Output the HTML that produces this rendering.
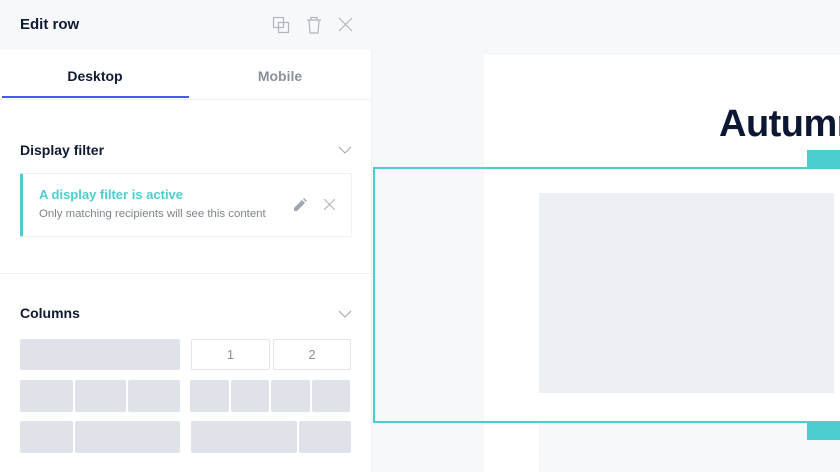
<!DOCTYPE html><html><head><style>
*{box-sizing:border-box;margin:0;padding:0}
body{width:840px;height:472px;overflow:hidden;position:relative;background:#f7f8fa;font-family:"Liberation Sans",sans-serif}
.a{position:absolute}
.g{position:absolute;background:#dfe3e9;border-radius:2px}
</style></head><body>
<div class="a" style="left:0;top:0;width:372px;height:472px;background:#fff;border-right:1px solid #eef0f3"></div>
<div class="a" style="left:0;top:0;width:372px;height:50px;background:#f7f8fa"></div>
<div class="a" style="left:20px;top:16px;font-size:15px;font-weight:bold;color:#0f1a33">Edit row</div>
<svg class="a" style="left:272px;top:16px" width="18" height="18" fill="none" stroke="#b0b5bd" stroke-width="1.2"><rect x="1.5" y="1.5" width="10" height="10"/><rect x="6.5" y="6.5" width="10" height="10"/></svg>
<svg class="a" style="left:306px;top:16px" width="16" height="18" fill="none" stroke="#b0b5bd" stroke-width="1.2"><path d="M1 4h14M5 4V1.5h6V4M3 4l1 13h8l1-13"/></svg>
<svg class="a" style="left:338px;top:17px" width="15" height="15" stroke="#b0b5bd" stroke-width="1.2"><path d="M1 1l13 13M14 1L1 14"/></svg>
<div class="a" style="left:0;top:50px;width:372px;height:50px;border-bottom:1px solid #eef0f3"></div>
<div class="a" style="left:2px;top:68px;width:186px;text-align:center;font-size:14px;font-weight:bold;color:#0f1a33">Desktop</div>
<div class="a" style="left:188px;top:68px;width:184px;text-align:center;font-size:14px;font-weight:bold;color:#8a919c">Mobile</div>
<div class="a" style="left:2px;top:96px;width:187px;height:2px;background:#4a5ae8"></div>
<div class="a" style="left:20px;top:142px;font-size:14px;font-weight:bold;color:#0f1a33">Display filter</div>
<svg class="a" style="left:338px;top:146px" width="14" height="8" fill="none" stroke="#a0a6b0"><path d="M1 1l6 6 6-6"/></svg>
<div class="a" style="left:20px;top:173px;width:332px;height:64px;border:1px solid #eef0f3;border-left:3px solid #4ecdd0;border-radius:2px"></div>
<div class="a" style="left:39px;top:187px;font-size:13px;font-weight:bold;color:#4ecdd0">A display filter is active</div>
<div class="a" style="left:39px;top:208px;font-size:11.4px;color:#7d838d">Only matching recipients will see this content</div>
<svg class="a" style="left:294px;top:198px" width="13" height="13" fill="#a0a6b0"><path d="M0 10v3h3l8-8-3-3zM9 1l3 3 1-1-3-3z"/></svg>
<svg class="a" style="left:324px;top:199px" width="11" height="11" stroke="#b4b9c1" stroke-width="1.2"><path d="M0 0l11 11M11 0L0 11"/></svg>
<div class="a" style="left:0;top:273px;width:371px;height:1px;background:#eef0f3"></div>
<div class="a" style="left:20px;top:305px;font-size:14px;font-weight:bold;color:#0f1a33">Columns</div>
<svg class="a" style="left:338px;top:310px" width="14" height="8" fill="none" stroke="#a0a6b0"><path d="M1 1l6 6 6-6"/></svg>
<div class="g" style="left:20px;top:339px;width:160px;height:31px"></div>
<div class="a" style="left:191px;top:339px;width:79px;height:31px;border:1px solid #e2e5ea;border-radius:2px;text-align:center;line-height:29px;font-size:13px;color:#8a919c">1</div>
<div class="a" style="left:273px;top:339px;width:78px;height:31px;border:1px solid #e2e5ea;border-radius:2px;text-align:center;line-height:29px;font-size:13px;color:#8a919c">2</div>
<div class="g" style="left:20px;top:380px;width:53px;height:32px"></div>
<div class="g" style="left:75px;top:380px;width:51px;height:32px"></div>
<div class="g" style="left:128px;top:380px;width:52px;height:32px"></div>
<div class="g" style="left:190px;top:380px;width:39px;height:32px"></div>
<div class="g" style="left:231px;top:380px;width:38px;height:32px"></div>
<div class="g" style="left:271px;top:380px;width:39px;height:32px"></div>
<div class="g" style="left:312px;top:380px;width:38px;height:32px"></div>
<div class="g" style="left:20px;top:421px;width:53px;height:32px"></div>
<div class="g" style="left:75px;top:421px;width:105px;height:32px"></div>
<div class="g" style="left:191px;top:421px;width:106px;height:32px"></div>
<div class="g" style="left:299px;top:421px;width:52px;height:32px"></div>
<div class="a" style="left:484px;top:55px;width:356px;height:417px;background:#fff"></div>
<div class="a" style="left:719px;top:103px;font-size:38px;font-weight:bold;color:#0b1733;white-space:nowrap;letter-spacing:-0.5px">Autumn</div>
<div class="a" style="left:807px;top:150px;width:33px;height:19px;background:#4ecdd0"></div>
<div class="a" style="left:373px;top:167px;width:480px;height:256px;border:2px solid #4ecdd0"></div>
<div class="a" style="left:539px;top:193px;width:295px;height:200px;background:#eceff3"></div>
<div class="a" style="left:539px;top:423px;width:301px;height:49px;background:#f7f8fa;border-left:1px dashed #f0f1f4"></div>
<div class="a" style="left:807px;top:423px;width:33px;height:17px;background:#4ecdd0"></div>
</body></html>
